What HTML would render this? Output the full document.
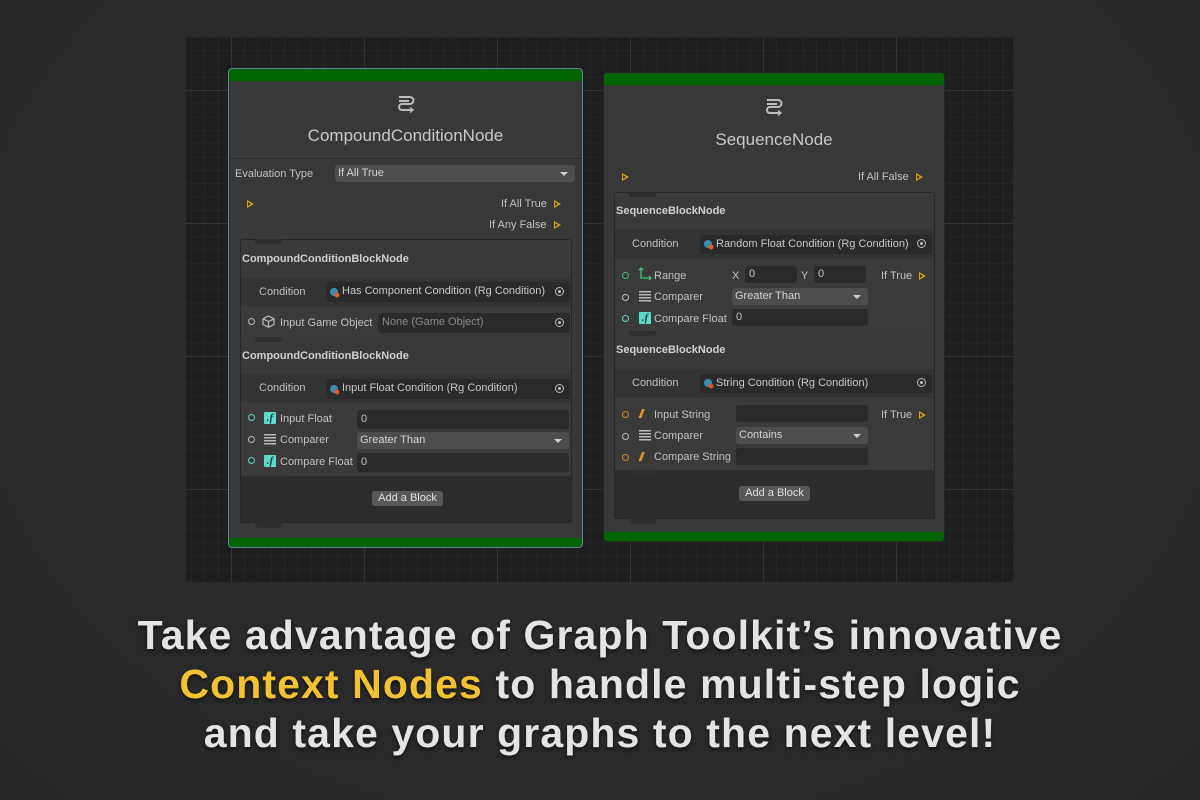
<!DOCTYPE html>
<html><head><meta charset="utf-8"><style>
*{margin:0;padding:0;box-sizing:border-box}
body{width:1200px;height:800px;overflow:hidden;background:#2b2b2b;font-family:"Liberation Sans",sans-serif;position:relative}
.bgtex{position:absolute;inset:0;background:radial-gradient(ellipse at 50% 40%,#303030 0%,#2a2a2a 60%,#262626 100%)}
.grid{position:absolute;left:186px;top:37px;width:827px;height:545px;background-color:#1e1e1e;
background-image:linear-gradient(90deg,#333 1px,transparent 1px),linear-gradient(0deg,#333 1px,transparent 1px),linear-gradient(90deg,#262626 1px,transparent 1px),linear-gradient(0deg,#262626 1px,transparent 1px);
background-size:133px 133px,133px 133px,13.3px 13.3px,13.3px 13.3px;
background-position:45px 54px,45px 54px,45px 54px,45px 54px}
.a{position:absolute}
.node{position:absolute;background:#383838;border:1px solid #262626;border-radius:4px;overflow:hidden}
.node.sel{border:1px solid #5c8199}
.gtop{position:absolute;left:0;right:0;top:0;height:12px;background:#016501}
.gbot{position:absolute;left:0;right:0;height:9px;background:#016501}
.title{position:absolute;left:0;right:0;text-align:center;font-size:17px;color:#c9c9c9}
.t{position:absolute;font-size:11px;color:#c2c2c2;white-space:nowrap;line-height:13px}
.b{font-weight:bold;color:#d0d0d0}
.fld{position:absolute;background:#2a2a2a;border-radius:3px;font-size:11px;color:#c8c8c8;line-height:19px;padding-left:4px;white-space:nowrap;overflow:hidden}
.dd{position:absolute;background:#4d4d4d;border-radius:3px;font-size:11px;color:#d4d4d4;line-height:17px;padding-left:3px}
.dd:after{content:"";position:absolute;right:7px;top:7px;border:4px solid transparent;border-top:4px solid #cfcfcf;border-bottom:0}
.tri{position:absolute;width:0;height:0;border-top:4px solid transparent;border-bottom:4px solid transparent;border-left:7px solid #d9a412}
.tri:after{content:"";position:absolute;left:-6px;top:-2px;border-top:2px solid transparent;border-bottom:2px solid transparent;border-left:3px solid #383838}
.circ{position:absolute;width:7px;height:7px;border-radius:50%;border:1.3px solid #bcbcbc}
.circ.c{border-color:#5fd7c4}.circ.o{border-color:#d08a2a}.circ.g{border-color:#3fc77a}
.cont{position:absolute;background:#2c2c2c;border:1px solid #262626;border-radius:3px}
.hdr{position:absolute;background:#393939}
.crow{position:absolute;background:#333}
.prow{position:absolute;background:#3a3a3a}
.notch{position:absolute;width:27px;height:5px;background:#2e2e2e;border-radius:0 0 3px 3px}
.btn{position:absolute;background:#585858;border-radius:3px;font-size:11px;color:#e0e0e0;text-align:center;line-height:15px}
.tgt{position:absolute;width:9px;height:9px;border-radius:50%;border:1.3px solid #bbb}
.tgt:after{content:"";position:absolute;left:1.5px;top:1.5px;width:3px;height:3px;border-radius:50%;background:#bbb}
.ficon{position:absolute;width:12px;height:12px;background:#5ddccb;border-radius:1px;color:#1d3b38;font:bold italic 11px "Liberation Serif",serif;text-align:center;line-height:12px}
.sicon{position:absolute;color:#e39a2a;font:bold italic 12px "Liberation Sans",sans-serif;letter-spacing:-2px}
.cicon{position:absolute;width:12px;height:11px;background:repeating-linear-gradient(180deg,#bbb 0 1.5px,transparent 1.5px 3px)}
.cap{position:absolute;left:0;width:1200px;text-align:center;font-weight:bold;font-size:41px;color:#e4e4e4;letter-spacing:1.1px;text-shadow:0 2px 4px rgba(0,0,0,.6);white-space:nowrap}
.y{color:#f2c232}
</style></head><body>
<div class="bgtex"></div>
<div class="grid"></div>

<svg width="0" height="0" style="position:absolute"><defs>
<g id="hicon"><path d="M-7 -5 H4 A3.5 3.5 0 0 1 4 2 H-4 A3 3 0 0 0 -4 8 H6" fill="none" stroke="#bdbdbd" stroke-width="2"/><path d="M-7 -1 H3" stroke="#bdbdbd" stroke-width="2"/><path d="M4 5.5 L7 8 L4 10.5" fill="none" stroke="#bdbdbd" stroke-width="1.4"/></g>
<g id="condi"><circle cx="5" cy="5" r="4" fill="#3d8fb0"/><circle cx="8" cy="8" r="2.5" fill="#e05a2a"/></g>
</defs></svg>

<!-- LEFT NODE -->
<div class="node sel" style="left:228px;top:68px;width:355px;height:480px">
  <div class="gtop"></div>
  <svg class="a" style="left:167px;top:24px" width="20" height="22"><use href="#hicon" x="10" y="9"/></svg>
  <div class="title" style="top:57px">CompoundConditionNode</div>
  <div class="a" style="left:0;right:0;top:89px;height:1px;background:#2a2a2a"></div>
  <div class="t" style="left:6px;top:99px">Evaluation Type</div>
  <div class="dd" style="left:106px;top:96px;width:240px;height:17px">If All True</div>
  <div class="tri" style="left:18px;top:131px"></div>
  <div class="t" style="left:272px;top:129px">If All True</div>
  <div class="tri" style="left:325px;top:131px"></div>
  <div class="t" style="left:260px;top:150px">If Any False</div>
  <div class="tri" style="left:325px;top:152px"></div>

  <div class="cont" style="left:11px;top:170px;width:332px;height:284px">
    <div class="hdr" style="left:0;top:0;width:330px;height:38px"></div>
    <div class="notch" style="left:14px;top:-1px;background:#2c2c2c"></div>
    <div class="t b" style="left:1px;top:13px">CompoundConditionBlockNode</div>
    <div class="crow" style="left:0;top:38px;width:330px;height:28px"></div>
    <div class="t" style="left:18px;top:46px">Condition</div>
    <div class="fld" style="left:85px;top:42px;width:244px;height:20px;padding-left:16px">Has Component Condition (Rg Condition)</div>
    <svg class="a" style="left:88px;top:47px" width="12" height="12"><use href="#condi"/></svg>
    <div class="tgt" style="left:314px;top:47px"></div>
    <div class="prow" style="left:0;top:66px;width:330px;height:31px"></div>
    <div class="circ" style="left:7px;top:78px"></div>
    <svg class="a" style="left:21px;top:75px" width="13" height="13"><path d="M6.5 1 L12 3.8 V9.5 L6.5 12.2 L1 9.5 V3.8 Z M1 3.8 L6.5 6.6 L12 3.8 M6.5 6.6 V12.2" fill="none" stroke="#bbb" stroke-width="1.2"/></svg>
    <div class="t" style="left:39px;top:77px">Input Game Object</div>
    <div class="fld" style="left:137px;top:73px;width:192px;height:20px;color:#8a8a8a">None (Game Object)</div>
    <div class="tgt" style="left:314px;top:78px"></div>

    <div class="hdr" style="left:0;top:97px;width:330px;height:37px"></div>
    <div class="notch" style="left:14px;top:97px"></div>
    <div class="t b" style="left:1px;top:110px">CompoundConditionBlockNode</div>
    <div class="crow" style="left:0;top:134px;width:330px;height:28px"></div>
    <div class="t" style="left:18px;top:142px">Condition</div>
    <div class="fld" style="left:85px;top:139px;width:244px;height:20px;padding-left:16px">Input Float Condition (Rg Condition)</div>
    <svg class="a" style="left:88px;top:144px" width="12" height="12"><use href="#condi"/></svg>
    <div class="tgt" style="left:314px;top:144px"></div>
    <div class="prow" style="left:0;top:162px;width:330px;height:74px"></div>
    <div class="circ c" style="left:7px;top:174px"></div>
    <div class="ficon" style="left:23px;top:172px">.f</div>
    <div class="t" style="left:39px;top:173px">Input Float</div>
    <div class="fld" style="left:116px;top:170px;width:212px;height:19px">0</div>
    <div class="circ" style="left:7px;top:196px"></div>
    <div class="cicon" style="left:23px;top:194px"></div>
    <div class="t" style="left:39px;top:194px">Comparer</div>
    <div class="dd" style="left:116px;top:192px;width:212px;height:17px">Greater Than</div>
    <div class="circ c" style="left:7px;top:217px"></div>
    <div class="ficon" style="left:23px;top:215px">.f</div>
    <div class="t" style="left:39px;top:216px">Compare Float</div>
    <div class="fld" style="left:116px;top:213px;width:212px;height:19px">0</div>
    <div class="notch" style="left:14px;top:236px"></div>
    <div class="btn" style="left:131px;top:251px;width:71px;height:15px">Add a Block</div>
    <div class="notch" style="left:14px;top:282px;height:6px"></div>
  </div>
  <div class="gbot" style="top:469px"></div>
</div>

<!-- RIGHT NODE -->
<div class="node" style="left:603px;top:72px;width:342px;height:470px">
  <div class="gtop"></div>
  <svg class="a" style="left:160px;top:23px" width="20" height="22"><use href="#hicon" x="10" y="9"/></svg>
  <div class="title" style="top:57px">SequenceNode</div>
  <div class="tri" style="left:18px;top:100px"></div>
  <div class="t" style="left:254px;top:98px">If All False</div>
  <div class="tri" style="left:312px;top:100px"></div>

  <div class="cont" style="left:10px;top:119px;width:321px;height:327px">
    <div class="hdr" style="left:0;top:0;width:319px;height:36px"></div>
    <div class="notch" style="left:14px;top:-1px;background:#2c2c2c"></div>
    <div class="t b" style="left:1px;top:12px">SequenceBlockNode</div>
    <div class="crow" style="left:0;top:36px;width:319px;height:30px"></div>
    <div class="t" style="left:17px;top:45px">Condition</div>
    <div class="fld" style="left:85px;top:42px;width:232px;height:19px;padding-left:16px">Random Float Condition (Rg Condition)</div>
    <svg class="a" style="left:88px;top:46px" width="12" height="12"><use href="#condi"/></svg>
    <div class="tgt" style="left:302px;top:46px"></div>
    <div class="prow" style="left:0;top:66px;width:319px;height:72px"></div>
    <div class="circ g" style="left:7px;top:79px"></div>
    <svg class="a" style="left:24px;top:74px" width="13" height="13"><path d="M2 1 V11 H12 M0 3 L2 1 L4 3 M10 9 L12 11 L10 13" fill="none" stroke="#3fc77a" stroke-width="1.3"/></svg>
    <div class="t" style="left:39px;top:77px">Range</div>
    <div class="t" style="left:117px;top:77px">X</div>
    <div class="fld" style="left:130px;top:73px;width:52px;height:17px;line-height:17px">0</div>
    <div class="t" style="left:186px;top:77px">Y</div>
    <div class="fld" style="left:199px;top:73px;width:52px;height:17px;line-height:17px">0</div>
    <div class="t" style="left:266px;top:77px">If True</div>
    <div class="tri" style="left:304px;top:79px"></div>
    <div class="circ" style="left:7px;top:101px"></div>
    <div class="cicon" style="left:24px;top:98px"></div>
    <div class="t" style="left:39px;top:98px">Comparer</div>
    <div class="dd" style="left:117px;top:95px;width:136px;height:17px">Greater Than</div>
    <div class="circ c" style="left:7px;top:122px"></div>
    <div class="ficon" style="left:24px;top:119px">.f</div>
    <div class="t" style="left:39px;top:120px">Compare Float</div>
    <div class="fld" style="left:117px;top:116px;width:136px;height:17px;line-height:17px">0</div>

    <div class="hdr" style="left:0;top:138px;width:319px;height:38px"></div>
    <div class="notch" style="left:14px;top:138px"></div>
    <div class="t b" style="left:1px;top:151px">SequenceBlockNode</div>
    <div class="crow" style="left:0;top:176px;width:319px;height:29px"></div>
    <div class="t" style="left:17px;top:184px">Condition</div>
    <div class="fld" style="left:85px;top:181px;width:232px;height:19px;padding-left:16px">String Condition (Rg Condition)</div>
    <svg class="a" style="left:88px;top:185px" width="12" height="12"><use href="#condi"/></svg>
    <div class="tgt" style="left:302px;top:185px"></div>
    <div class="prow" style="left:0;top:205px;width:319px;height:72px"></div>
    <div class="circ o" style="left:7px;top:218px"></div>
    <div class="sicon" style="left:24px;top:214px">//</div>
    <div class="t" style="left:39px;top:216px">Input String</div>
    <div class="fld" style="left:121px;top:212px;width:132px;height:17px"></div>
    <div class="t" style="left:266px;top:216px">If True</div>
    <div class="tri" style="left:304px;top:218px"></div>
    <div class="circ" style="left:7px;top:240px"></div>
    <div class="cicon" style="left:24px;top:237px"></div>
    <div class="t" style="left:39px;top:237px">Comparer</div>
    <div class="dd" style="left:121px;top:234px;width:132px;height:17px">Contains</div>
    <div class="circ o" style="left:7px;top:261px"></div>
    <div class="sicon" style="left:24px;top:257px">//</div>
    <div class="t" style="left:39px;top:258px">Compare String</div>
    <div class="fld" style="left:121px;top:255px;width:132px;height:17px"></div>
    <div class="notch" style="left:14px;top:277px"></div>
    <div class="btn" style="left:124px;top:293px;width:71px;height:15px">Add a Block</div>
    <div class="notch" style="left:14px;top:325px;height:6px"></div>
  </div>
  <div class="gbot" style="top:459px"></div>
</div>

<div class="cap" style="top:612px">Take advantage of Graph Toolkit’s innovative</div>
<div class="cap" style="top:661px"><span class="y">Context Nodes</span> to handle multi-step logic</div>
<div class="cap" style="top:710px">and take your graphs to the next level!</div>
</body></html>
